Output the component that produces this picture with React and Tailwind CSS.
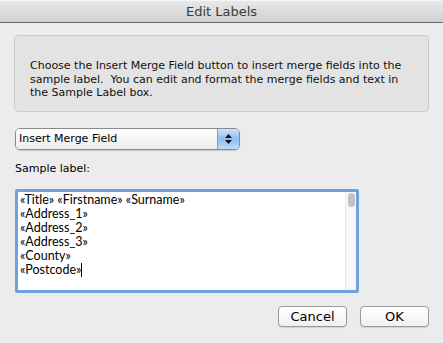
export default function App() {
  const lines = [
    '«Title» «Firstname» «Surname»',
    '«Address_1»',
    '«Address_2»',
    '«Address_3»',
    '«County»',
    '«Postcode»',
  ]

  return (
    <div className="w-[443px] h-[343px] bg-[#ececec] flex flex-col text-black" style={{ fontFamily: '"Lucida Grande", "DejaVu Sans", sans-serif' }}>
      {/* title bar */}
      <div className="h-[23px] shrink-0 flex items-center justify-center bg-gradient-to-b from-[#e8e8e8] to-[#d0d0d0] border-t border-[#f6f6f6] border-b border-b-[#6b6b6b]">
        <span className="text-[13px] text-[#3a3a3a]">Edit Labels</span>
      </div>

      <div className="flex flex-col px-[14px]">
        {/* info box */}
        <div className="mt-[12px] h-[77px] rounded-[4px] border border-[#cbcbcb] bg-[#e3e3e3] pl-[15px] pr-[10px] pt-[23px] text-[11px] leading-[13.5px] text-[#111]">
          Choose the Insert Merge Field button to insert merge fields into the sample label.&nbsp; You can edit and format the merge fields and text in the Sample Label box.
        </div>

        {/* popup button */}
        <div className="mt-[16px] ml-[1px] w-[225px] h-[22px] flex rounded-[5px] border border-[#8a8a8a] shadow-[0_1px_1px_rgba(0,0,0,0.15)] overflow-hidden">
          <div className="flex-1 flex items-center pl-[3px] bg-gradient-to-b from-white to-[#ececec] text-[11px]">
            Insert Merge Field
          </div>
          <div className="w-[22px] flex flex-col items-center justify-center gap-[2px] bg-gradient-to-b from-[#cfe3fa] via-[#8ebdf2] to-[#b9dcfb] border-l border-[#7a9ccf]">
            <svg width="7" height="4" viewBox="0 0 7 4"><path d="M3.5 0L7 4H0z" fill="#111" /></svg>
            <svg width="7" height="4" viewBox="0 0 7 4"><path d="M0 0h7L3.5 4z" fill="#111" /></svg>
          </div>
        </div>

        <div className="mt-[12px] ml-[1px] text-[11px] leading-[14px]">Sample label:</div>

        {/* sample label text box */}
        <div className="mt-[13px] ml-[1px] w-[344px] h-[104px] flex border-[3px] border-[#6fa2da] rounded-[2px] bg-white">
          <div className="flex-1 pl-[2px] pt-[1px] text-[12.5px] leading-[14px] text-black" style={{ fontFamily: 'Lato, "Noto Sans", sans-serif' }}>
            {lines.map((l, i) => (
              <div key={i} className="flex items-center">
                {l}
                {i === lines.length - 1 && <span className="inline-block w-px h-[14px] bg-black" />}
              </div>
            ))}
          </div>
          <div className="w-[11px] bg-[#f7f7f7] border-l border-[#e6e6e6] flex justify-center pt-[1px]">
            <div className="w-[7px] h-[14px] rounded-full bg-[#c2c2c2]" />
          </div>
        </div>

        {/* buttons */}
        <div className="mt-[13px] flex justify-end gap-[13px]">
          <button className="w-[69px] h-[21px] rounded-[4px] border border-[#9a9a9a] bg-gradient-to-b from-white to-[#f0f0f0] text-[13px] leading-none shadow-[0_1px_1px_rgba(0,0,0,0.12)]">
            Cancel
          </button>
          <button className="w-[69px] h-[21px] rounded-[4px] border border-[#9a9a9a] bg-gradient-to-b from-white to-[#f0f0f0] text-[13px] leading-none shadow-[0_1px_1px_rgba(0,0,0,0.12)]">
            OK
          </button>
        </div>
      </div>
    </div>
  )
}
